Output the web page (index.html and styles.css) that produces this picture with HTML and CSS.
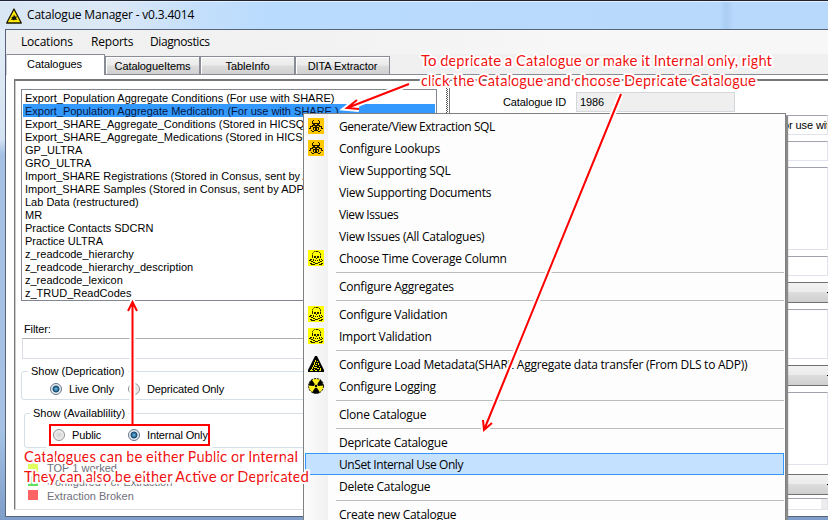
FILE: index.html
```html
<!DOCTYPE html>
<html lang="en">
<head>
<meta charset="utf-8">
<title>Catalogue Manager</title>
<link rel="stylesheet" href="styles.css">
</head>
<body>
<svg class="defs" width="0" height="0" aria-hidden="true">
  <symbol id="bio" viewBox="0 0 16 16"><path fill="#ffc800" d="M0 0h16v16H0z"/><g fill="#201800" shape-rendering="crispEdges"><path d="M5 2h1v1H5zM10 2h1v1h-1zM4 3h1v3H4zM11 3h1v3h-1zM5 5h2v2H5zM9 5h2v2H9zM7 5h2v1H7zM4 7h3v1H4zM9 7h3v1H9zM7 7h2v4H7zM3 8h2v1H3zM11 8h2v1h-2zM5 9h2v1H5zM9 9h2v1H9zM2 8h1v3H2zM13 8h1v3h-1zM1 10h1v1H1zM14 10h1v1h-1zM5 10h1v2H5zM10 10h1v2h-1zM7 11h1v2H7zM8 11h1v2H8zM6 12h1v1H6zM9 12h1v1H9zM4 13h2v1H4zM10 13h2v1h-2zM3 12h1v1H3zM12 12h1v1h-1z"/></g></symbol>
  <symbol id="skull" viewBox="0 0 16 16"><path fill="#ff0" d="M0 0h16v16H0z"/><path fill="none" stroke="#222200" stroke-dasharray="2 .6" d="M4.500 7V3.500L6.500 1.500H10.500L12.500 3.500V7"/><path fill="#222200" d="M4 6h1v2H4zM12 6h1v2h-1zM6 6h2v2H6zM9 6h2v2H9zM8 8h1v1H8zM5 9h1v2H5zM11 9h1v2h-1zM7 10h1v1H7zM9 10h1v1H9zM2 9h2v1H2zM1 10h2v1H1zM3 11h2v1H3zM5 12h2v1H5zM7 13h3v1H7zM10 12h2v1h-2zM12 11h2v1h-2zM14 10h1v1h-1zM13 9h1v1h-1zM5 14h2v1H5zM2 13h2v1H2zM3 14h2v1H3zM11 14h3v1h-3zM13 13h2v1h-2z"/></symbol>
  <symbol id="hazard" viewBox="0 0 16 16"><path d="M7 0h2l7 14v2H0v-2z"/><path fill="#f4e800" d="M7 4h1v2H7zM9 5h1v1H9zM6 6h1v3H6zM8 7h1v1H8zM10 7h1v2h-1zM5 9h1v2H5zM7 9h2v1H7zM11 10h1v1h-1zM4 11h1v2H4zM6 11h3v1H6zM9 12h2v1H9zM3 13h1v1H3zM6 13h1v1H6zM12 12h1v2h-1zM2 14h3v1H2zM7 14h2v1H7zM11 14h2v1h-2z"/></symbol>
  <symbol id="rad" viewBox="0 0 16 16"><circle cx="8" cy="8" r="7.500" fill="#ffef20" stroke="#111" stroke-dasharray="2 1"/><path d="M8 8L3.700 1.500Q1 3.500.8 7.500L5.500 8zM8 8L12.300 1.500Q15 3.500 15.200 7.500L10.500 8zM8 8.500L4 14.500Q8 16.500 12 14.500z"/><circle cx="8" cy="8" r="2" fill="#ffef20"/><circle cx="8" cy="8" r="1.200"/></symbol>
</svg>
<div class="window">
  <header class="titlebar">
    <svg class="app-icon" viewBox="0 0 16 16"><path d="M8 1L15.300 15H.7z" fill="#ffeb00" stroke="#181800" stroke-width="1.300" stroke-linejoin="round"/><path d="M8 6.500L9 8.500 11 8.500 10 10.500 11.500 12 8.800 11.700 8 12.500 7 11.700 4.500 12 6 10.500 5.500 9 7.200 8.800z" fill="#181800"/></svg>
    <span class="title">Catalogue Manager - v0.3.4014</span>
  </header>
  <div class="frame">
    <div class="client">
      <nav class="menubar"><span class="m1">Locations</span><span class="m2">Reports</span><span class="m3">Diagnostics</span></nav>
      <div class="tabs"><div class="tab active">Catalogues</div><div class="tab">CatalogueItems</div><div class="tab">TableInfo</div><div class="tab">DITA Extractor</div></div>
      <main class="page">
        <div class="split">
          <section class="left">
            <ul class="list">
              <li>Export_Population Aggregate Conditions (For use with SHARE)</li>
              <li class="selected">Export_Population Aggregate Medication (For use with SHARE )</li>
              <li>Export_SHARE_Aggregate_Conditions (Stored in HICSQL)</li>
              <li>Export_SHARE_Aggregate_Medications (Stored in HICSQL)</li>
              <li>GP_ULTRA</li>
              <li>GRO_ULTRA</li>
              <li>Import_SHARE Registrations (Stored in Consus, sent by ADP)</li>
              <li>Import_SHARE Samples (Stored in Consus, sent by ADP)</li>
              <li>Lab Data (restructured)</li>
              <li>MR</li>
              <li>Practice Contacts SDCRN</li>
              <li>Practice ULTRA</li>
              <li>z_readcode_hierarchy</li>
              <li>z_readcode_hierarchy_description</li>
              <li>z_readcode_lexicon</li>
              <li>z_TRUD_ReadCodes</li>
            </ul>
            <div class="filter-label">Filter:</div>
            <div class="filter-box"></div>
            <fieldset class="g1"><legend>Show (Deprication)</legend><i class="radio on"></i><span class="opt">Live Only</span><i class="radio"></i><span>Depricated Only</span></fieldset>
            <fieldset class="g2"><legend>Show (Availablility)</legend><i class="radio"></i><span class="opt">Public</span><i class="radio on"></i><span>Internal Only</span></fieldset>
            <div class="key">
              <div><i class="sw yellow"></i>TOP 1 worked</div>
              <div><i class="sw green"></i>Configured For Extraction</div>
              <div><i class="sw red"></i>Extraction Broken</div>
            </div>
          </section>
          <div class="splitter"></div>
          <section class="right">
            <div class="id-row"><label>Catalogue ID</label><span class="id-field">1986</span></div>
            <div class="box name">or use with</div>
            <div class="box short"></div>
            <div class="box tall"></div>
            <div class="box line"></div>
            <div class="drop"><i></i></div>
            <div class="box mid"></div>
            <div class="drop"><i></i></div>
            <div class="box large"></div>
            <div class="drop"><i></i></div>
            <div class="box last"><i></i></div>
          </section>
        </div>
      </main>
    </div>
  </div>

  <div class="context">
    <div class="item tight"><svg><use href="#bio"/></svg>Generate/View Extraction SQL</div>
    <div class="item"><svg><use href="#bio"/></svg>Configure Lookups</div>
    <div class="item">View Supporting SQL</div>
    <div class="item">View Supporting Documents</div>
    <div class="item tight">View Issues</div>
    <div class="item">View Issues (All Catalogues)</div>
    <div class="item"><svg><use href="#skull"/></svg>Choose Time Coverage Column</div>
    <div class="sep"></div>
    <div class="item">Configure Aggregates</div>
    <div class="sep"></div>
    <div class="item"><svg><use href="#skull"/></svg>Configure Validation</div>
    <div class="item"><svg><use href="#skull"/></svg>Import Validation</div>
    <div class="sep"></div>
    <div class="item"><svg><use href="#hazard"/></svg>Configure Load Metadata(SHARE Aggregate data transfer (From DLS to ADP))</div>
    <div class="item"><svg><use href="#rad"/></svg>Configure Logging</div>
    <div class="sep"></div>
    <div class="item">Clone Catalogue</div>
    <div class="sep"></div>
    <div class="item">Depricate Catalogue</div>
    <div class="item hot tight">UnSet Internal Use Only</div>
    <div class="item">Delete Catalogue</div>
    <div class="sep"></div>
    <div class="item">Create new Catalogue</div>
  </div>

  <svg class="notes" viewBox="0 0 828 520">
    <g class="halo"><path d="M409 84L347 108M357 100L347 108 359 109"/><path d="M621 94L484 430M483 420L484 430 492 423"/><path d="M132.500 423V302M128 311L132.500 302 137 311"/><path class="edge" d="M48 423H211V447H48z"/></g>
    <g class="ink"><path d="M409 84L347 108M357 100L347 108 359 109"/><path d="M621 94L484 430M483 420L484 430 492 423"/><path d="M132.500 425V302M128 311L132.500 302 137 311"/><path d="M50 425H209V445H50z"/></g>
    <g class="words">
      <text x="421" y="66" textLength="351">To depricate a Catalogue or make it Internal only, right</text>
      <text x="421" y="86" textLength="335">click the Catalogue and choose Depricate Catalogue</text>
      <text x="24" y="462" textLength="274">Catalogues can be either Public or Internal</text>
      <text x="24" y="482" textLength="285">They can also be either Active or Depricated</text>
    </g>
  </svg>
</div>
</body>
</html>
```
FILE: styles.css
```css
* { box-sizing: border-box; }
body { margin: 0; width: 828px; height: 520px; overflow: hidden; font: 11px/13px "Liberation Sans", Arial, sans-serif; color: #000; }
.defs { position: absolute; }
.window { position: relative; width: 828px; height: 520px; overflow: hidden; display: flex; flex-direction: column; background: #b9d9fb; }
.titlebar { height: 29px; flex: none; display: flex; align-items: center; padding: 2px 0 0 6px; border-top: 1px solid #20222e; box-shadow: inset 0 1px #e2f0ff; background: linear-gradient(90deg, #d9e6f3 0, #dbe8f6 110px, #c4dffb 200px, #b9dbfe 270px, #b8d9fc 720px, #aacdf2 726px, #b8d9fc 734px); font: 12px/16px "Open Sans", sans-serif; }
.app-icon { width: 16px; height: 16px; margin-right: 5px; }
.title { letter-spacing: -.18px; margin-top: -2px; }
.frame { flex: 1; min-height: 0; display: flex; padding: 0 0 3px 5px; background: linear-gradient(180deg, #e3edf7 0, #d3e2f2 110px, #a4c1e4 125px, #a5c2e6 400px, #7e9dc8 491px); }
.client { flex: 1; min-width: 0; display: flex; flex-direction: column; border: solid #56657c; border-width: 1px 0 1px 1px; background: #f0f0f0; }
.menubar { height: 24px; flex: none; display: flex; align-items: center; padding-left: 15px; background: linear-gradient(90deg, #f0f0f0, #f2f2f2 320px, #f7f7f7 560px); font: 12px/24px "Open Sans", sans-serif; letter-spacing: -.2px; white-space: nowrap; }
.m1 { width: 70px; } .m2 { width: 59px; }
.m3 { letter-spacing: -.4px; }
.tabs { height: 20px; flex: none; display: flex; align-items: flex-end; }
.tab { height: 18px; width: 95px; border: 1px solid #898c95; border-bottom: 0; text-align: center; line-height: 18px; background: linear-gradient(#f2f2f2 0, #ebebeb 48%, #ddd 52%, #d0d0d0); box-shadow: inset 1px 1px #fff; letter-spacing: -.08px; }
.tab.active { width: 99px; height: 21px; background: #fff; z-index: 1; margin-bottom: -1px; line-height: 18px; padding-right: 2px; border-left-color: #c9cbd0; }
.page { flex: 1; min-height: 0; border-top: 1px solid #898c95; background: #fff; padding: 4px 0 6px 8px; }
.split { height: 100%; display: flex; border: solid #696969; border-width: 2px 0 1px 1px; border-color: #777 #777 #dfdfdf; }
.left { width: 430px; flex: none; padding-top: 8px; border-left: 1px solid #ccc; }
.list { margin: 0 0 0 5px; padding: 1px; width: 416px; height: 212px; list-style: none; border: 1px solid #828790; white-space: nowrap; overflow: hidden; }
.list li { height: 13px; line-height: 14px; padding-left: 2px; }
.list .selected { background: #3399ff; color: #08163c; }
.filter-label { margin: 22px 0 0 8px; letter-spacing: -.1px; }
.filter-box { margin: 2px 0 0 6px; width: 415px; height: 21px; border: 1px solid #dadde4; border-top-color: #abadb3; }
fieldset { position: relative; margin: 0; border: 1px solid #d5dfe5; border-radius: 3px; display: flex; align-items: center; min-width: 0; padding: 0; letter-spacing: -.12px; }
legend { position: absolute; top: -7px; left: 5px; padding: 0 3px; background: #fff; letter-spacing: 0; }
.g1 { margin: 12px 0 0 5px; width: 415px; height: 29px; padding: 7px 0 0 28px; }
.g2 { margin: 13px 0 0 8px; width: 412px; height: 35px; padding: 9px 0 0 28px; }
.g1 legend { left: 6px; }
.radio { width: 12px; height: 12px; flex: none; border: 1px solid #8e8f8f; border-radius: 50%; background: radial-gradient(#cfcfcf, #eee 65%, #fff); margin-right: 7px; }
.radio.on { border-color: #60758a; background: radial-gradient(circle, #67c5e8 0, #164773 42%, #e5e9ed 55%, #fff); }
.opt { width: 59px; }
.g2 .opt { width: 56px; }
.key { margin: 13px 0 0 12px; color: #70707a; }
.key div { display: flex; align-items: center; height: 14px; line-height: 15px; }
.sw { width: 10px; height: 10px; margin: -2px 9px 0 0; }
.yellow { background: #dfff60; } .green { background: #60df60; } .red { background: #ff6464; }
.splitter { width: 5px; flex: none; background: conic-gradient(#555 25%, #fff 0 50%, #555 0 75%, #fff 0) 1px 0 / 2px 2px repeat-y; border-right: 1px solid #777; }
.right { flex: 1; min-width: 0; padding: 11px 0 0; }
.id-row { display: flex; height: 20px; margin-bottom: 3px; padding-left: 53px; line-height: 21px; letter-spacing: -.1px; }
.id-row label { width: 73px; }
.id-field { width: 159px; height: 20px; padding-left: 3px; border: 1px solid #d4d7dc; background: #efefef; line-height: 19px; }
.box { margin: 0 0 0 126px; border: 1px solid #e0e3ec; border-top-color: #a0a2b0; background: #fff; overflow: hidden; }
.name { height: 20px; padding-left: 206px; line-height: 19px; letter-spacing: -.1px; white-space: nowrap; }
.short { height: 20px; margin-top: 6px; }
.tall { height: 83px; margin-top: 6px; }
.line { height: 20px; margin-top: 6px; }
.drop { height: 21px; margin: 6px 0 6px 126px; border: solid #707070; border-width: 1px 0; background: linear-gradient(#f2f2f2, #ebebeb 48%, #ddd 50%, #cfcfcf); display: flex; justify-content: flex-end; align-items: center; }
.drop i { width: 1px; height: 1px; background: #000; }
.mid { height: 50px; }
.large { height: 73px; }
.large + .drop { margin: 9px 0 3px 126px; }
.last { height: 12px; padding-left: 244px; }
.last i { display: block; height: 10px; background: #ececec; }

.context { position: absolute; left: 303px; top: 113px; width: 483px; height: 420px; padding: 1px 1px 0; border: 1px solid #808080; background: linear-gradient(90deg, #fcfcfc, #f1f1f1 24px, #fdfdfd 24px); box-shadow: 2px 3px 1px #8a8a8a; font: 12px/23px "Open Sans", sans-serif; }
.item { height: 22px; position: relative; padding-left: 34px; white-space: nowrap; letter-spacing: -.26px; }
.tight { letter-spacing: -.42px; }
.item svg { position: absolute; left: 3px; top: 3px; width: 16px; height: 16px; }
.sep { height: 6px; margin-left: 31px; background: linear-gradient(#bdbdbd, #bdbdbd) 0 3px / 100% 1px no-repeat; }
.hot { background: #c4e1ff; box-shadow: inset 0 0 0 1px #3399ff; }
.notes { position: absolute; left: 0; top: 0; width: 828px; height: 520px; }
.halo path { fill: none; stroke: #fff; stroke-width: 6; }
.halo .edge { stroke-width: 3; }
.ink path { fill: none; stroke: #f00; stroke-width: 2; }
.words { font: 15px Lato, "Open Sans", sans-serif; fill: #f01010; stroke: #fff; stroke-width: 4px; stroke-linejoin: round; paint-order: stroke; }
```
